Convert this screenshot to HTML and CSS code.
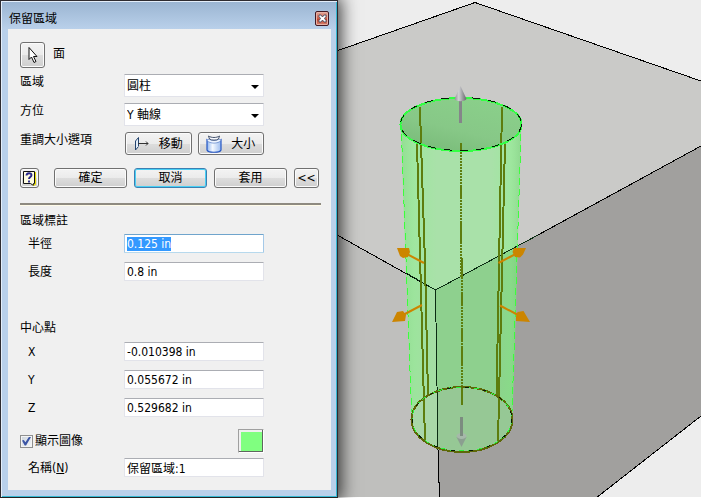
FILE: index.html
```html
<!DOCTYPE html>
<html lang="zh-Hant">
<head>
<meta charset="utf-8">
<title>保留區域</title>
<link rel="stylesheet" href="styles.css">
</head>
<body>
<main class="workspace">
  <section class="dialog" aria-labelledby="dialog-title">
    <header class="titlebar">
      <h1 class="title" id="dialog-title">保留區域</h1>
      <button class="close" type="button" aria-label="關閉">
        <svg width="9" height="9" viewBox="0 0 9 9"><path d="M1 1h2l1.500 2 1.500-2h2v1.500L6.500 4.500 8 6.500V8H6L4.500 6 3 8H1V6.500l1.500-2L1 2.500z" fill="#fff" stroke="#4a4f63" stroke-width=".9"/></svg>
      </button>
    </header>
    <form class="panel">
      <div class="pick">
        <button class="btn tool" type="button" id="pick-face" aria-label="面">
          <svg width="12" height="18" viewBox="0 0 12 18"><path d="M2 1.500v12l2.500-2.500 2.500 5.500 2-1-2.500-5h3.500z" fill="#fff" stroke="#111"/></svg>
        </button>
        <label for="pick-face">面</label>
      </div>

      <div class="grid options">
        <label for="region">區域</label>
        <span class="select"><select id="region"><option>圓柱</option></select></span>
        <label for="orient">方位</label>
        <span class="select"><select id="orient"><option>Y 軸線</option></select></span>
        <span>重調大小選項</span>
        <div class="resize">
          <button class="btn" type="button">
            <svg width="16" height="16" viewBox="0 0 16 16"><path d="M4.500 2v8L1.500 14V5z" fill="#e3edf8"/><path d="M4.500 10V1.500L1.500 5v9L4.500 10.500" fill="none" stroke="#23436e"/><path d="M4 7.500h10M12 5.500l2 2-2 2" fill="none" stroke="#333"/></svg>
            移動
          </button>
          <button class="btn" type="button">
            <svg width="16" height="18" viewBox="0 0 16 18"><defs><linearGradient id="can"><stop offset="0" stop-color="#8fb4ee"/><stop offset=".4" stop-color="#f4f9ff"/><stop offset="1" stop-color="#9dbdf0"/></linearGradient></defs><path d="M1 5v10c1 3 13 3 14 0V5c-3 3-11 3-14 0z" fill="url(#can)" stroke="#2456c4" stroke-width="1.200"/><path d="M1 5.500c3 3.500 11 3.500 14 0l-2-1.500c-2 2-8 2-10 0z" fill="#edf4ff" stroke="#6d91cf" stroke-width=".8"/><path d="M2.500 1l1 3c2 1.500 7 1.500 9 0l1-3c-3 2-8 2-11 0z" fill="#f7faff" stroke="#33425e" stroke-width=".9"/></svg>
            大小
          </button>
        </div>
      </div>

      <div class="actions">
        <button class="btn help" type="button" aria-label="說明">
          <svg width="15" height="17" viewBox="0 0 15 17"><path d="M1.500 1.500h11v12h-1v2l-3-2h-7z" fill="#fffde0" stroke="#111"/><path d="M13.500 2v12.500h-1.500v1.500" fill="none" stroke="#e5db00"/><path d="M4.500 5.500C4.500 2.500 9.500 2.500 9.500 5c0 2-2.500 1.800-2.500 4M7 10.500v2" fill="none" stroke="#28278c" stroke-width="1.900"/></svg>
        </button>
        <button class="btn wide" type="submit">確定</button>
        <button class="btn wide default" type="button">取消</button>
        <button class="btn wide" type="button">套用</button>
        <button class="btn fold" type="button">&lt;&lt;</button>
      </div>

      <hr class="rule">

      <h2 class="heading">區域標註</h2>
      <div class="grid fields">
        <label for="radius">半徑</label><input id="radius" type="text" value="0.125 in">
        <label for="length">長度</label><input id="length" type="text" value="0.8 in">
      </div>

      <h2 class="heading center">中心點</h2>
      <div class="grid fields">
        <label for="cx">X</label><input id="cx" type="text" value="-0.010398 in">
        <label for="cy">Y</label><input id="cy" type="text" value="0.055672 in">
        <label for="cz">Z</label><input id="cz" type="text" value="0.529682 in">
      </div>

      <div class="display">
        <label class="check"><input type="checkbox" checked>顯示圖像</label>
        <button class="swatch" type="button" aria-label="顏色"></button>
      </div>
      <div class="grid fields">
        <label for="name">名稱(<u>N</u>)</label><input id="name" type="text" value="保留區域:1">
      </div>
    </form>
  </section>

  <svg class="scene" viewBox="338 0 363 498" preserveAspectRatio="xMinYMin slice" aria-hidden="true">
    <defs>
      <clipPath id="tube"><path d="M400.500 124.500A60.500 26.500 0 0 1 521.500 124.500L512.500 419.500A50.500 33 0 0 1 411.500 419.500z"/></clipPath>
      <clipPath id="base"><ellipse cx="462" cy="419.500" rx="50.500" ry="33"/></clipPath>
      <linearGradient id="side"><stop offset="0" stop-color="#5cd05c" stop-opacity=".3"/><stop offset=".12" stop-color="#7cff7c" stop-opacity=".2"/><stop offset=".3" stop-color="#7f7" stop-opacity="0"/><stop offset=".75" stop-color="#7f7" stop-opacity="0"/><stop offset=".9" stop-color="#7f7" stop-opacity=".2"/><stop offset="1" stop-color="#5cc05c" stop-opacity=".35"/></linearGradient>
      <linearGradient id="mouth" x1="0" y1="1" x2=".6" y2="0"><stop offset="0" stop-color="#76b876"/><stop offset=".5" stop-color="#87c887"/><stop offset="1" stop-color="#8acf8a"/></linearGradient>
      <linearGradient id="steel"><stop offset="0" stop-color="#8c8c90"/><stop offset=".35" stop-color="#d0d0d4"/><stop offset="1" stop-color="#66666c"/></linearGradient>
    </defs>
    <path fill="#cacac8" d="M338 50L475 2.500 701 81V146L435.500 290 338 235z"/>
    <path fill="#bfbfbd" d="M338 235l97.500 55L439 498H338z"/>
    <path fill="#a1a09e" d="M435.500 290L701 146V416L596 498H439z"/>
    <g clip-path="url(#tube)">
      <path fill="#a9e1a9" d="M338 0H701V146L435.500 290 338 235z"/>
      <path fill="#a5dda5" d="M338 235l97.500 55L439 498H338z"/>
      <path fill="#8ed08e" d="M435.500 290L701 146V498H439z"/>
      <path fill="url(#side)" d="M400 90H522L513 460H411z"/>
    </g>
    <g clip-path="url(#base)">
      <path fill="#a9d8a8" d="M400 380H437L439 460H400z"/>
      <path fill="#96c895" d="M437 380H520V460H438.500z"/>
    </g>
    <ellipse cx="461" cy="124.500" rx="60.500" ry="26.500" fill="url(#mouth)"/>
    <g fill="none" stroke="#000" shape-rendering="crispEdges">
      <path d="M338 50.500L475 2.500 701 81M338 235.500l97.500 54.500M538 235l163-89M701 416L596 498M438 450l1.500 48"/>
      <path stroke="#0a2c12" d="M406 273l29.500 17L538 235M435.500 290L438 450"/>
    </g>
    <g fill="none" stroke="#5d7d0e" stroke-width="2" shape-rendering="crispEdges">
      <path d="M420 107L421 143 425 263 428 395M417 143L425 441M502 107L496.500 397M505 143L498 441"/>
      <path d="M461 143V277L462 277V405" stroke-dasharray="2 1"/>
      <path d="M461 143v8M461 185v13M461 222v22M462 258v20M462 293v12M462 330v12M462 348v17M462 390v15"/>
    </g>
    <g fill="none" shape-rendering="crispEdges">
      <path d="M401.500 134L411.500 412M521 134L512 412" stroke="#3cff3c" stroke-dasharray="7 4"/>
      <ellipse cx="461" cy="124.500" rx="60.500" ry="26.500" stroke="#3f4" stroke-width="2"/>
      <ellipse cx="461" cy="124" rx="60.500" ry="26.500" stroke="#061a06" stroke-dasharray="8 8"/>
      <ellipse cx="462" cy="419.500" rx="50.500" ry="32.500" stroke="#5d6808" stroke-width="2"/>
      <ellipse cx="462" cy="419" rx="50" ry="32" stroke="#28f53a" stroke-dasharray="5 4"/>
      <ellipse cx="462" cy="419" rx="50" ry="32" stroke="#061a06" stroke-dasharray="4 14"/>
    </g>
    <g fill="#cc8500" stroke="none">
      <path stroke="#cc8500" stroke-width="2" d="M424 263l-19-10M498.500 263l19-10M422 305l-19 10M500 305.500l19 10"/>
      <path d="M397 248h12l1 4-2 5-5 1-3-2zM526 248h-12l-1.500 4 2.500 5 5 .500 3-3zM392 322l5-10 6-1 3 4-1 6zM530 322l-14-1v-5l1.500-4 6-1z"/>
    </g>
    <path fill="#85858a" d="M459 100h3v23h-3z"/>
    <path fill="url(#steel)" d="M460.500 86l6 13c-2 3-10 3-12 0z"/>
    <path fill="#7c8c80" d="M460 417h3v20h-3z"/>
    <path fill="#8b9f90" d="M456.500 437l5 10 5-10z"/>
    <ellipse cx="461.500" cy="436" rx="5" ry="3" fill="#a6b8aa"/>
    <path fill="#7c8c80" d="M460 430h3v6h-3z"/>
    <path fill="#fff" d="M338 497H701v1H338z"/>
  </svg>
</main>
<script src="select.js"></script>
</body>
</html>
```
FILE: styles.css
```css
* { box-sizing: border-box; }
body {
  margin: 0;
  background: #ededed;
  color: #000;
  font: 12px/16px "DejaVu Sans Condensed", "Noto Sans", "Noto Sans CJK TC", sans-serif;
}
button, input, select { font: inherit; color: inherit; margin: 0; }
.workspace { display: flex; min-height: 100vh; }
.scene { flex: 1; min-width: 0; height: 100vh; display: block; }

.dialog {
  position: relative;
  z-index: 1;
  flex: none;
  display: flex;
  flex-direction: column;
  padding: 1px 6px 7px 7px;
  border: 1px solid #2e2b30;
  border-bottom-color: #222;
  background: linear-gradient(#9ab4d1, #b9d0ea 28px);
  box-shadow: inset 1px 1px #e4eefa, inset -1px -1px #35b8d2, 0 0 16px 3px rgba(0, 0, 0, .75);
}
.titlebar {
  display: flex;
  align-items: center;
  justify-content: space-between;
  height: 27px;
  padding: 6px 2px 0 1px;
}
.title { margin: 0; font-size: 12px; font-weight: 400; }
.close {
  display: grid;
  place-items: center;
  width: 14px;
  height: 15px;
  padding: 0;
  border: 1px solid #431922;
  border-radius: 2px;
  background: linear-gradient(#e5aa9c, #c75a47 50%, #b93c25 52%, #d88370);
  box-shadow: inset 0 0 0 1px #e6b0a5;
}
.panel {
  flex: 1;
  padding: 13px 10px 12px 12px;
  background: #f0f0f0;
}

.btn {
  display: flex;
  align-items: center;
  justify-content: center;
  padding: 0;
  border: 1px solid #707070;
  border-radius: 3px;
  background: linear-gradient(#f3f3f3, #ebebeb 50%, #dddddd 51%, #cfcfcf);
  box-shadow: inset 0 0 0 1px #fbfbfb;
  white-space: nowrap;
}
.pick { display: flex; gap: 8px; }
.pick label { padding-top: 4px; }
.tool { width: 25px; height: 26px; }

.grid { display: grid; grid-template-columns: 104px 140px; }
.options { gap: 6px 0; margin-top: 6px; }
.select { position: relative; display: block; }
.select::after {
  content: "";
  position: absolute;
  top: 11px;
  right: 5px;
  border: 4px solid transparent;
  border-top-color: #000;
  border-bottom: 0;
  pointer-events: none;
}
select, input[type="text"] {
  display: block;
  width: 100%;
  padding: 0 2px;
  border: 1px solid #e2e3ea;
  border-top-color: #abadb3;
  border-radius: 1px;
  background: #fff;
  outline: 0;
  appearance: none;
}
select { height: 23px; }
input[type="text"] { height: 19px; }
input[type="text"]:focus { border-color: #6fa4cc #a5c9e8 #b7d9ed #a5c9e8; }
input::selection { background: #3399ff; color: #fff; }
.resize { display: flex; gap: 6px; }
.resize .btn { flex: 1; height: 23px; gap: 9px; margin-left: 1px; }
.resize .btn + .btn { margin: 0; }

.actions { display: flex; gap: 7px; margin-top: 13px; padding-right: 2px; }
.actions .btn { height: 20px; }
.help { width: 19px; }
.wide { width: 73px; }
.help + .wide { margin-left: 8px; }
.default { border-color: #3c7fb1; box-shadow: inset 0 0 0 1px #48d0f5; }
.fold { width: 25px; }

.rule {
  height: 3px;
  margin: 15px 0 0;
  border: 0;
  border-bottom: 1px solid #fffbe8;
  background: #8e8a80;
}
.heading { margin: 7px 0 5px; font-size: 12px; font-weight: 400; }
.heading.center { margin: 39px 0 6px; }
.fields { gap: 9px 0; align-items: center; }
.fields label { padding-left: 8px; }

.display {
  display: flex;
  align-items: center;
  justify-content: space-between;
  width: 244px;
  margin: 12px 0 5px;
}
.check { display: flex; align-items: center; gap: 2px; }
.check input {
  display: grid;
  place-items: center;
  width: 13px;
  height: 13px;
  border: 1px solid #8e8f8f;
  background: linear-gradient(135deg, #cbd3dc, #f6f8fa);
  box-shadow: inset 0 0 0 1px #f4f4f4;
  appearance: none;
}
.check input:checked::before {
  content: "";
  width: 9px;
  height: 9px;
  background: #3b55a5;
  clip-path: polygon(0 45%, 20% 40%, 38% 65%, 80% 0, 100% 5%, 45% 100%, 30% 100%);
}
.swatch {
  width: 26px;
  height: 24px;
  padding: 0;
  border: 1px solid;
  border-color: #a0a0a0 #fff #fff #a0a0a0;
  background: #80ff80;
  box-shadow: inset -1px -1px #5f655f, inset 2px 2px #f0f0f0;
}
```
FILE: select.js
```js
const radius = document.getElementById("radius");
radius.focus();
radius.select();
```
